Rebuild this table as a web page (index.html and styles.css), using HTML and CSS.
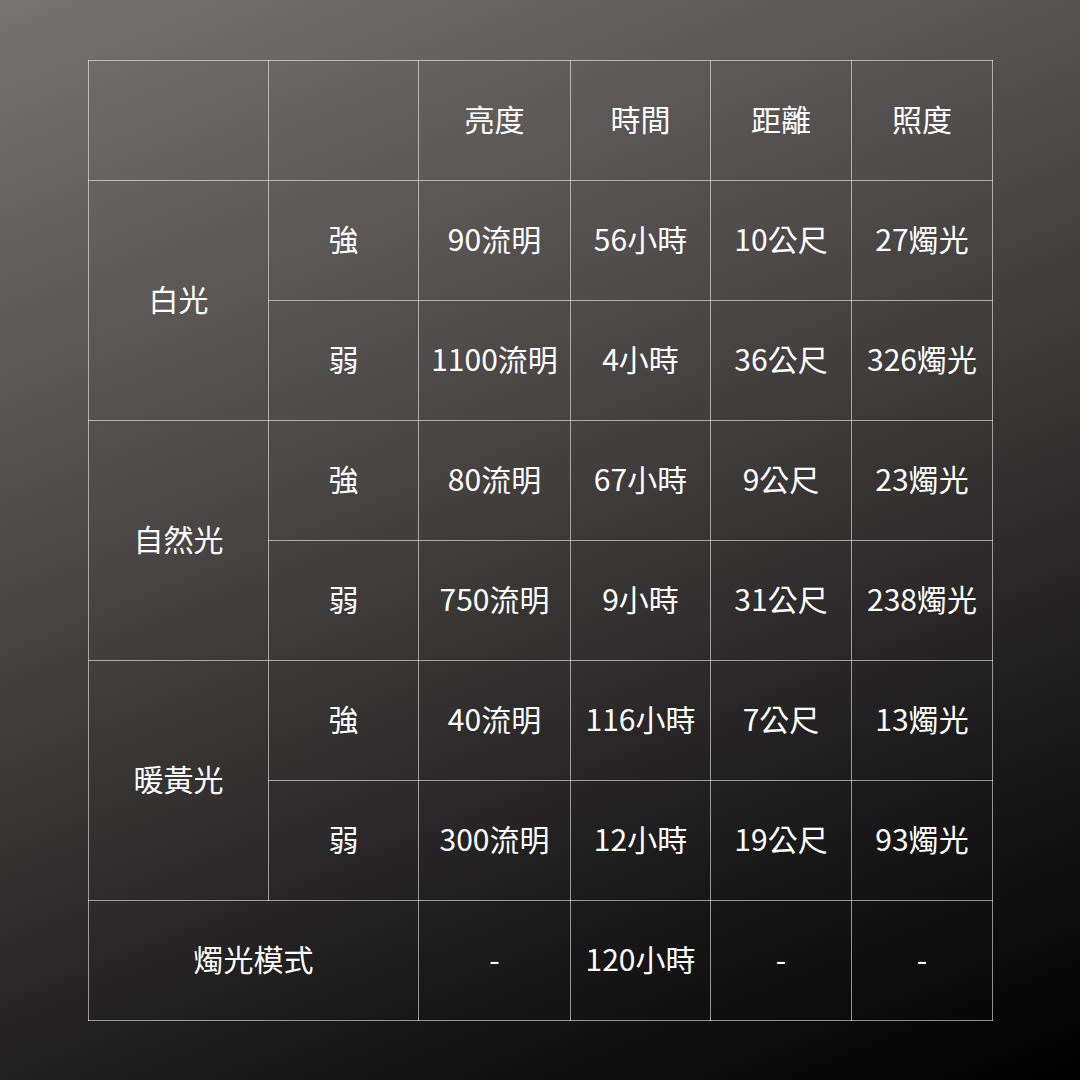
FILE: index.html
```html
<!DOCTYPE html>
<html lang="zh-Hant">
<head>
<meta charset="utf-8">
<link rel="stylesheet" href="styles.css">
</head>
<body>
<div class="page">
<table class="spec">
<colgroup>
<col class="c1"><col class="c2"><col class="c3"><col class="c4"><col class="c5"><col class="c6">
</colgroup>
<tr><td></td><td></td><td>亮度</td><td>時間</td><td>距離</td><td>照度</td></tr>
<tr><td rowspan="2">白光</td><td>強</td><td>90流明</td><td>56小時</td><td>10公尺</td><td>27燭光</td></tr>
<tr><td>弱</td><td>1100流明</td><td>4小時</td><td>36公尺</td><td>326燭光</td></tr>
<tr><td rowspan="2">自然光</td><td>強</td><td>80流明</td><td>67小時</td><td>9公尺</td><td>23燭光</td></tr>
<tr><td>弱</td><td>750流明</td><td>9小時</td><td>31公尺</td><td>238燭光</td></tr>
<tr><td rowspan="2">暖黃光</td><td>強</td><td>40流明</td><td>116小時</td><td>7公尺</td><td>13燭光</td></tr>
<tr><td>弱</td><td>300流明</td><td>12小時</td><td>19公尺</td><td>93燭光</td></tr>
<tr><td colspan="2">燭光模式</td><td>-</td><td>120小時</td><td>-</td><td>-</td></tr>
</table>
</div>
</body>
</html>
```
FILE: styles.css
```css
html, body {
  margin: 0;
  padding: 0;
}
body {
  width: 1080px;
  height: 1080px;
  background: linear-gradient(158deg, #787373 0%, #4a4646 40%, #1c1b1b 75%, #000 100%);
  font-family: "Noto Sans CJK TC", "Noto Sans", sans-serif;
  color: #fff;
}
.page {
  padding: 60px 0 0 88px;
}
.spec {
  border-collapse: collapse;
  table-layout: fixed;
  width: 905px;
}
.c1 { width: 180px; }
.c2 { width: 150px; }
.c3 { width: 152px; }
.c4 { width: 140px; }
.c5 { width: 141px; }
.c6 { width: 141px; }
.spec td {
  height: 113px;
  padding: 0 0 6px 0;
  border: 1px solid rgba(255, 255, 255, 0.55);
  text-align: center;
  vertical-align: middle;
  font-size: 30px;
  line-height: 1;
  white-space: nowrap;
}
```
